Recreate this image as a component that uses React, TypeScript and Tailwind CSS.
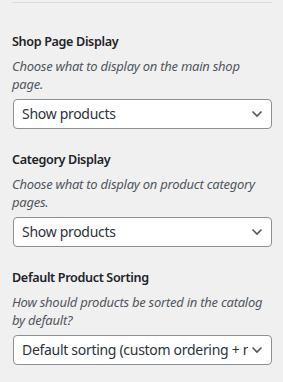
import React from "react";

function Chevron() {
  return (
    <svg
      className="absolute right-[8px] top-1/2 -translate-y-1/2"
      width="12"
      height="8"
      viewBox="0 0 12 8"
      fill="none"
    >
      <polyline points="1.5,1.5 6,6 10.5,1.5" stroke="#50575e" strokeWidth="1.6" />
    </svg>
  );
}

function Control({ title, desc, value }: { title: string; desc: string; value: string }) {
  return (
    <div className="mt-[21px] first:mt-[29px]">
      <div className="text-[12.6px] leading-[20px] font-semibold tracking-[-0.35px] text-[#1d2327]">{title}</div>
      <div className="mt-[5px] text-[13px] leading-[18px] italic tracking-[-0.25px] text-[#50575e]">{desc}</div>
      <div className="relative mt-[6px] ml-px h-[30px] rounded-[4px] border border-[#8c8f94] bg-white pl-[8px] pr-[23px] flex items-center">
        <span className="block overflow-hidden whitespace-nowrap text-[14px] leading-[20px] tracking-[-0.3px] text-[#2c3338]">{value}</span>
        <Chevron />
      </div>
    </div>
  );
}

export default function App() {
  return (
    <div
      className="w-[283px] h-[382px] overflow-hidden bg-[#f0f0f1] pl-3 pr-[11px]"
      style={{ fontFamily: '"Noto Sans", "Open Sans", sans-serif' }}
    >
      <div className="h-[2px]" />
      <div className="h-px bg-[#dcdcde]" />
      <div>
        <Control
          title="Shop Page Display"
          desc="Choose what to display on the main shop page."
          value="Show products"
        />
        <Control
          title="Category Display"
          desc="Choose what to display on product category pages."
          value="Show products"
        />
        <Control
          title="Default Product Sorting"
          desc="How should products be sorted in the catalog by default?"
          value="Default sorting (custom ordering + name)"
        />
      </div>
    </div>
  );
}
